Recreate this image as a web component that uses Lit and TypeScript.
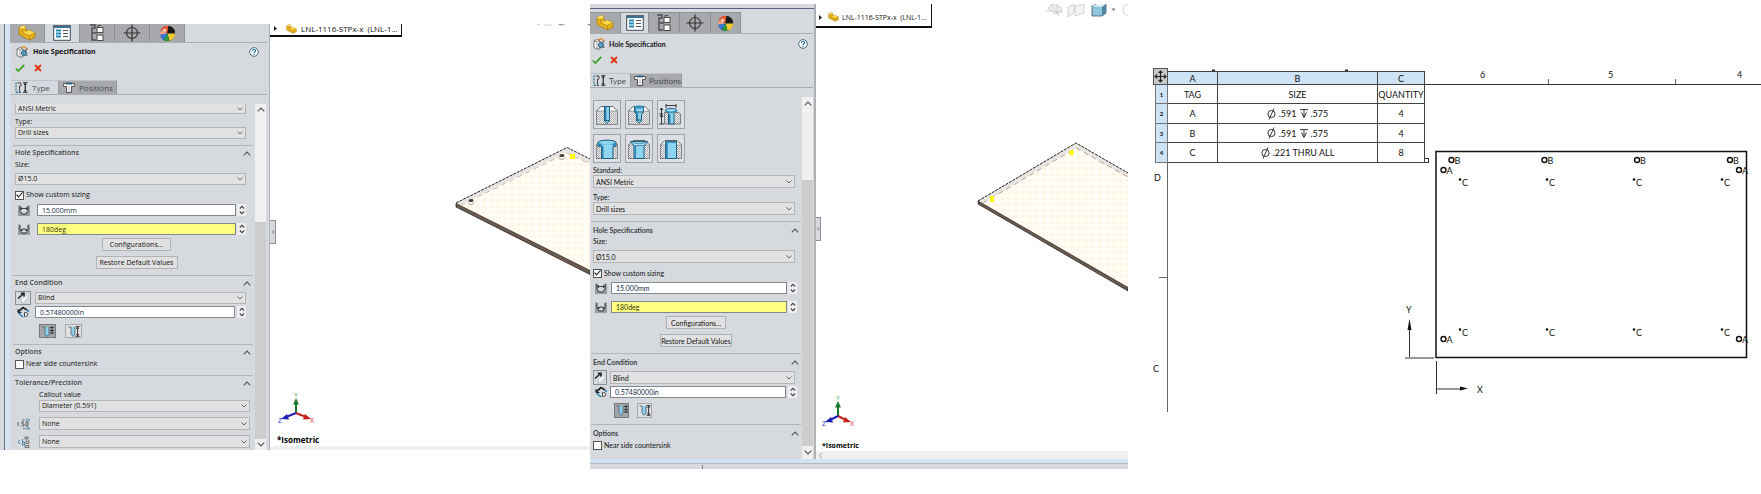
import { LitElement, html, svg, css, nothing } from "lit";
import { customElement, property } from "lit/decorators.js";

const chevronDown = html`<svg class="chev" viewBox="0 0 6 4" width="6" height="4"><path d="M.5 .5 3 3 5.5 .5" fill="none" stroke="#666" /></svg>`;
const chevronUp = html`<svg class="chev" viewBox="0 0 8 5" width="8" height="5"><path d="M.7 4.3 4 1 7.3 4.3" fill="none" stroke="#555" stroke-width="1.1" /></svg>`;

const partShape = svg`
  <path d="M1 2.500 5 .6 8 2v4l3-.8 6 2.600v4.500L11.500 15 1 9.600z" fill="#e8b21c" stroke="#9a7210" stroke-width=".7" />
  <path d="M1 2.500 5 .6 8 2 4.500 3.800z" fill="#ffe27a" />
  <path d="M5 8 11 5.200 17 7.800 11.500 10.400z" fill="#ffd84a" />
  <path d="M4.500 3.800V8l7 2.600V15M11.500 10.500 17 7.800" fill="none" stroke="#a87c12" stroke-width=".7" />`;
const partIcon = (w: number) => html`<svg viewBox="0 0 18 16" width=${w} height=${Math.round((w * 16) / 18)}>${partShape}</svg>`;

const listIcon = html`<svg viewBox="0 0 18 16" width="18" height="16">
  <rect x=".7" y=".7" width="16.600" height="14.600" fill="#fff" stroke="#3c4a55" />
  <rect x="1" y="1" width="16" height="2" fill="#3a6f92" />
  <path d="M3 5.500h5M3 8.500h5M3 11.500h5" stroke="#1d86b5" stroke-width="2" />
  <path d="M10 5.500h5M10 8.500h5M10 11.500h5" stroke="#555" />
</svg>`;
const configIcon = html`<svg viewBox="0 0 16 18" width="16" height="18">
  <path d="M1 1h5v3H3v12h4M3 9h5" fill="none" stroke="#4b4b4d" stroke-width="1.300" />
  <rect x="8" y="3.500" width="6" height="5" fill="#fff" stroke="#4b4b4d" /><rect x="8" y="11" width="6" height="5.500" fill="#fff" stroke="#4b4b4d" />
  <path d="M9 3.500V1.500h3" fill="none" stroke="#4b4b4d" />
</svg>`;
const targetIcon = html`<svg viewBox="0 0 18 18" width="18" height="18">
  <circle cx="9" cy="9" r="5.500" fill="none" stroke="#333" stroke-width="1.200" /><path d="M9 .5v17M.5 9h17" stroke="#333" stroke-width="1.200" />
</svg>`;
const ballIcon = html`<svg viewBox="0 0 18 18" width="17" height="17">
  <circle cx="9" cy="9" r="8" fill="#222" />
  <path d="M9 9 10 1A8 8 0 0 0 2 5z" fill="#e8552a" /><path d="M9 9 2 5A8 8 0 0 0 1.500 12z" fill="#f6a08a" />
  <path d="M9 9 10 1a8 8 0 0 1 7 6z" fill="#1a1a1a" /><path d="M9 9 17 9a8 8 0 0 1-6 7.800z" fill="#f1c832" />
  <path d="M9 9 11 16.800A8 8 0 0 1 5 16z" fill="#2a9a3c" /><path d="M9 9 5 16A8 8 0 0 1 1.200 10z" fill="#3777d6" />
  <circle cx="6" cy="5.500" r="1.800" fill="#fff" opacity=".7" />
</svg>`;
const wizardIcon = html`<svg viewBox="0 0 12 12" width="12" height="12">
  <path d="M1 3 4 1.500 7 3v8L4 11 1 9.500z" fill="#fff" stroke="#555" stroke-width=".8" />
  <path d="M4 3.800V11M1 3l3 .9L7 3" fill="none" stroke="#777" stroke-width=".7" />
  <path d="M5 2 8 .6 11.400 3" fill="none" stroke="#e0902c" stroke-width="1.300" />
  <circle cx="8" cy="7" r="2.600" fill="#4aa3c7" stroke="#345" stroke-width=".7" /><path d="M8.500 5 11.500 3M9.500 8l2 2" stroke="#444" />
</svg>`;
const helpIcon = html`<svg viewBox="0 0 10 10" width="10" height="10"><circle cx="5" cy="5" r="4.300" fill="#fff" stroke="#3a5a70" stroke-width=".9" />
  <path d="M3.500 3.900C3.500 2 6.600 2 6.600 3.900 6.600 5 5 5 5 6.200M5 7v1" fill="none" stroke="#1f6f9a" stroke-width="1.100" /></svg>`;
const okIcon = html`<svg viewBox="0 0 10 8" width="10" height="8"><path d="M.8 4.500 3.300 7 9.300 .8" fill="none" stroke="#35a31c" stroke-width="1.700" /></svg>`;
const cancelIcon = html`<svg viewBox="0 0 8 8" width="8" height="8"><path d="M1 1 7 7M7 1 1 7" stroke="#e03414" stroke-width="1.800" /></svg>`;
const typeIcon = html`<svg viewBox="0 0 13 11" width="13" height="11">
  <path d="M1 .5V10.500M1 10.300h5" stroke="#2b6a90" stroke-width="1.200" stroke-dasharray="2 1" fill="none" />
  <path d="M2.500 1h3.500v3H4.500v6" fill="none" stroke="#444" /><path d="M8 .7h4.500M8 10.200h4.500M10.200 1v9" stroke="#222" stroke-width="1.100" />
  <path d="M8.700 3 10.200 1.200 11.700 3zM8.700 8 10.200 9.800 11.700 8z" fill="#222" />
</svg>`;
const positionsIcon = html`<svg viewBox="0 0 12 11" width="12" height="11">
  <path d="M.6 1.500h10.800v3H8.500v6h-5v-6H.6z" fill="#f4f4f4" stroke="#555" /><path d="M3 1.500h6" stroke="#245f80" stroke-width="1.800" /><path d="M6 4v6" stroke="#bbb" />
</svg>`;
const sizeIcon = (angle: boolean) => html`<svg viewBox="0 0 12 11" width="12" height="11">
  <path d="M0 1 2 0V6L4 9H8L10 6V0L12 1V11H0z" fill="#999da1" /><path d="M2 1V6L4 9H8L10 6V1" fill="none" stroke="#333" />
  ${angle ? svg`<path d="M3 6.500C4 4.500 8 4.500 9 6.500M3.500 5 4 7M8.500 5 8 7" fill="none" stroke="#222" />` : svg`<path d="M2.500 3.500h7M4 2 2.500 3.500 4 5M8 2 9.500 3.500 8 5" fill="none" stroke="#222" stroke-width=".8" />`}
</svg>`;
const reverseIcon = html`<svg viewBox="0 0 12 12" width="12" height="12">
  <path d="M1 6.500 6 2M3.800 1.300H7V4.500" fill="none" stroke="#222" stroke-width="1.600" />
  <path d="M10 5 5 10M5 7v3.300h3.300" fill="none" stroke="#fff" stroke-width="2" /><path d="M11 5.500 6.500 10.500M4.500 7v4h4" fill="none" stroke="#aaa" stroke-width=".8" />
</svg>`;
const depthIcon = html`<svg viewBox="0 0 13 12" width="13" height="12">
  <path d="M1 6 6 1.500 10 4" fill="none" stroke="#222" stroke-width="1.800" /><path d="M1 3v3.500h3.500" fill="none" stroke="#222" />
  <path d="M1.500 7 6 11M10 4.500 12 5.500" stroke="#1f7fa8" stroke-width="1.400" />
  <path d="M7.500 6.500v4h1.200a2 2 0 0 0 0-4z" fill="#fff" stroke="#333" stroke-width=".9" />
</svg>`;
const drillIcon = (shoulder: boolean) => html`<svg viewBox="0 0 12 11" width="12" height="11">
  <path d="M.5 1H3V8L5 10.500 7 8V1" fill="#8fd0ee" stroke="#46606e" stroke-width=".8" />
  ${shoulder ? svg`<path d="M8 1.500h4M8 4.500h4M8 7h4M10 0v8" stroke="#222" stroke-width=".8" />` : svg`<path d="M7.500 .6h4M7.500 10.300h4M9.600 1v9M8.400 2.800 9.600 1.200 10.800 2.800M8.400 8.200 9.600 9.800 10.800 8.200" stroke="#222" stroke-width=".9" fill="none" />`}
</svg>`;
const toleranceIcon = html`<svg viewBox="0 0 13 12" width="13" height="12">
  <path d="M1 4v4M3 8h.8M5 4h2M5 4v2h2v2H5M9 4h2v4H9z" fill="none" stroke="#444" stroke-width=".8" />
  <path d="M5 2h3M10 .5v3M12 .5v3M6 10.500h2.500M10 9v3M12 9v3" stroke="#2f7f9e" stroke-width=".9" />
</svg>`;
const precisionIcon = html`<svg viewBox="0 0 13 12" width="13" height="12">
  <path d="M3 4 1 6 3 8M5.500 3v6h2V6h-2" fill="none" stroke="#2f7f9e" stroke-width=".9" />
  <path d="M8 1h3v2H8zM9 5h3v2.500H9zM8 9.500h4v2H8z" fill="none" stroke="#555" stroke-width=".8" />
</svg>`;

const holeTop: Record<string, ReturnType<typeof svg>> = {
  plain: svg`<path d="M9.500 3.500h5v14.500l-2.500 2.500-2.500-2.500z" fill="#8fd4f1" stroke="#205f82" /><path d="M10.700 4v14" stroke="#2f86b0" stroke-width="1.500" /><path d="M9.500 17.500h5" stroke="#205f82" />`,
  counterbore: svg`<path d="M7.500 4h9v5.500l-2 1.500v7L12 20l-2.500-2v-7l-2-1.500z" fill="#8fd4f1" stroke="#205f82" /><path d="M8.500 5v4.500l2 1.500v7" fill="none" stroke="#2f86b0" stroke-width="1.500" /><ellipse cx="12" cy="4" rx="4.500" ry="1.800" fill="#3b93bb" /><path d="M8 9h8M9.500 17h5" stroke="#205f82" />`,
  countersink: svg`<path d="M6 7.500C8 4.500 16 4.500 18 7.500L15 10.500V21H9.500V10.500z" fill="#8fd4f1" stroke="#205f82" /><path d="M6 7.500C9 10 15 10 18 7.500M10.700 11v9.500" fill="none" stroke="#2f86b0" stroke-width="1.400" />`,
  slotBore: svg`<path d="M3 5C7 2.500 17 2.500 21 5v4.500h-3V21.500H6.500V9.500H3z" fill="#8fd4f1" stroke="#205f82" /><path d="M3 5.500c4 2.500 14 2.500 18 0v4h-3V7.500H6.500v2H3z" fill="#2f86b0" /><path d="M7.700 9v12.500" stroke="#2f86b0" stroke-width="1.600" />`,
  slotSink: svg`<path d="M3.500 4.500h17L17 9v12.500H7V9z" fill="#8fd4f1" stroke="#205f82" /><path d="M3.500 4.500C9 7.500 15 7.500 20.500 4.500L17 8.500H7z" fill="#bfe6f6" stroke="#205f82" stroke-width=".6" /><path d="M8.200 9v12.500" stroke="#2f86b0" stroke-width="1.600" />`,
  slot: svg`<path d="M6.500 4.500h11v17h-11z" fill="#8fd4f1" stroke="#205f82" /><path d="M7.700 4.500v17" stroke="#2f86b0" stroke-width="2" /><path d="M6.500 4.500h11v1.500h-11z" fill="#3b93bb" />`,
};
const holeTypes = [
  ["Counterbore", "plain"], ["Countersink", "counterbore"], ["Hole", "countersink"],
  ["Counterbore slot", "slotBore"], ["Countersink slot", "slotSink"], ["Slot", "slot"],
];
const holeIcon = (kind: string) => html`<svg viewBox="0 0 24 24" width="24" height="24">
  <defs><pattern id="hatch" width="2" height="2" patternUnits="userSpaceOnUse"><rect width="2" height="2" fill="#eee" /><rect width="1" height="1" fill="#a5a5a5" /><rect x="1" y="1" width="1" height="1" fill="#bbb" /></pattern></defs>
  ${kind === "countersink"
    ? svg`<path d="M5.500 9.500h14l2 1.500V21H5.500z" fill="url(#hatch)" stroke="#555" stroke-width=".7" /><path d="M7 1v4M17 1v4M7 2.500h10M2.500 5v16M0 21h5M0 11h4M1 14 2.500 11.500 4 14M1 7 2.500 5 4 7" stroke="#222" stroke-width=".9" fill="none" />`
    : svg`<path d="M1.500 8 6 3.500H18L22.500 8V21.500h-21z" fill="#fff" stroke="#555" stroke-width=".9" /><path d="M1.500 8h21v13.500h-21z" fill="url(#hatch)" stroke="#777" stroke-width=".6" />`}
  ${holeTop[kind]}
</svg>`;

@customElement("hole-panel")
export class HolePanel extends LitElement {
  @property({ type: Boolean, reflect: true }) compact = false;

  static styles = css`
    :host {
      --lead: 22px; --lead-end: 20px; --sec: 2px; --row: 14px; --label-gap: 3px; --control: 12px;
      display: flex; flex-direction: column; min-width: 0;
      background: #d6dadf; color: #111;
      font: 7px/10px "Open Sans", "Noto Sans", sans-serif;
      border-right: 1px solid #aeb1b6;
    }
    :host([compact]) {
      --lead: 18px; --lead-end: 17px; --sec: 3px; --row: 15px; --label-gap: 4px; --control: 13px;
      font-family: Lato, "Open Sans", sans-serif;
      border-right-width: 2px;
    }
    * { box-sizing: border-box; }
    svg { display: block; }
    button, input, select { font: inherit; color: inherit; margin: 0; padding: 0; border-radius: 0; min-width: 0; }
    button { display: grid; place-items: center; background: none; border: 0; }
    .rail { height: 5px; border-bottom: 1px solid #5d6285; margin-bottom: 3px; display: grid; place-items: center; }
    .tabs { display: grid; grid-template-columns: repeat(5, 35px) 1fr; height: 19px; margin-right: 2px; border-bottom: 1px solid #aaadb1; overflow: hidden; }
    :host([compact]) .tabs { grid-template-columns: 31px 28px 31px 31px 30px 1fr; height: 22px; margin-right: 1px; }
    .tabs button { background: #a7a9ac; border-right: 1px solid #8d8f93; height: 18px; align-content: center; }
    :host([compact]) .tabs button { height: 21px; border-top: 1px solid #8d8f93; }
    .tabs button.on { background: none; }
    .title { display: flex; align-items: center; gap: 5px; height: 18px; padding: 0 10px 0 6px; }
    :host([compact]) .title { height: 20px; gap: 4px; padding: 0 6px 0 3px; }
    h2, h3 { font: inherit; font-weight: 700; margin: 0; flex: 1; }
    h3 { color: #3c3f44; font-weight: 600; }
    :host([compact]) h3 { font-weight: 700; }
    .confirm { display: flex; gap: 9px; height: 13px; padding-left: 5px; margin-bottom: 6px; }
    :host([compact]) .confirm { height: 12px; padding-left: 2px; gap: 8px; margin-bottom: 7px; }
    .modes { display: flex; height: 15px; margin: 0 2px 9px 1px; border-bottom: 1px solid #aaadb1; color: #4a4d52; }
    :host([compact]) .modes { margin: 0 1px 9px 0; }
    .modes button { display: flex; align-items: center; gap: 4px; width: 48px; padding-left: 4px; border-top: 1px solid #bfc2c6; border-right: 1px solid #97999d; font-size: 8px; }
    .modes button + button { width: 58px; background: #a7a9ac; }
    :host([compact]) .modes button { width: 41px; padding-left: 3px; gap: 3px; }
    :host([compact]) .modes button + button { width: 51px; }
    .body { display: flex; flex: 1; padding-right: 3px; }
    :host([compact]) .body { padding-right: 1px; }
    .content { flex: 1; min-width: 0; padding: 0 9px 2px 5px; }
    :host([compact]) .content { padding: 0 7px 6px 3px; }
    .scroll { width: 11px; background: #f0f0f0; display: flex; flex-direction: column; align-items: center; }
    .scroll .chev { margin: 3px 0; }
    .thumb { align-self: stretch; background: #cdcdcd; flex: 219; }
    .space { flex: 108; }
    :host([compact]) .scroll .chev { margin: 4px 0; }
    :host([compact]) .thumb { flex: 267; }
    :host([compact]) .space { flex: 70; }
    .combo { display: grid; flex: 1; min-width: 0; }
    .combo > * { grid-area: 1 / 1; }
    .combo .chev { place-self: center end; margin-right: 3px; pointer-events: none; }
    select { appearance: none; width: 100%; height: var(--control); border: 1px solid #b3b5b8; background: #e1e1e1; padding: 0 2px; outline: 0; line-height: 10px; }
    .cut select { height: 10px; border-top: 0; }
    .label { display: block; height: 10px; }
    .gap { margin-top: var(--label-gap); }
    .sec { display: flex; align-items: center; margin: 6px -7px 0 -2px; padding: var(--sec) 2px 0; border-top: 1px solid #b2b5b9; }
    :host([compact]) .sec { margin-right: -6px; }
    .size { margin-top: 2px; margin-bottom: 3px; }
    :host([compact]) .size { margin-top: 1px; margin-bottom: 4px; }
    .check { display: flex; align-items: center; gap: 2px; height: 10px; margin-top: 5px; }
    .check.opt { margin-top: 2px; }
    input[type="checkbox"] { appearance: none; width: 9px; height: 9px; border: 1px solid #555; background: #fff; display: grid; place-items: center; }
    input[type="checkbox"]:checked::before { content: ""; width: 7px; height: 6px; background: #333; clip-path: polygon(0 50%, 14% 36%, 36% 66%, 88% 0, 100% 14%, 36% 96%); }
    .field { display: grid; grid-template-columns: var(--lead) 1fr 10px; align-items: center; margin-top: 7px; }
    .field > svg { justify-self: start; margin-left: 3px; }
    .field.first { margin-top: 4px; }
    :host([compact]) .field { margin-right: -2px; }
    :host([compact]) .field > svg { margin-left: 2px; }
    .field.depth { grid-template-columns: var(--lead-end) 1fr 11px; margin-top: 1px; }
    .field.depth > svg { margin-left: 2px; }
    input[type="text"] { height: 12px; width: 100%; border: 1px solid #85888c; background: #fff; padding: 0 4px; color: #152c48; }
    input[type="text"].warn { background: #ffff80; color: #333310; }
    .spin { justify-self: end; width: 9px; height: 12px; background: #efefef; display: grid; place-items: center; }
    .push { height: 13px; margin: 3px auto 0; width: 69px; border: 1px solid #b0b2b5; background: #e1e1e1; white-space: nowrap; }
    .push + .push { margin-top: 5px; width: 82px; }
    :host([compact]) .push { width: 60px; }
    :host([compact]) .push + .push { width: 72px; }
    .pushes { padding-left: 12px; }
    :host([compact]) .pushes { padding-left: 4px; }
    .end { display: grid; grid-template-columns: var(--lead-end) 1fr; align-items: center; margin-top: 3px; }
    .flip { width: 16px; height: var(--row); border: 1px solid #8b8e92; }
    :host([compact]) .flip { width: 14px; }
    .modesel { display: flex; gap: 9px; margin: 6px 0 0 24px; }
    :host([compact]) .modesel { margin: 5px 0 0 21px; gap: 8px; }
    .modesel button { width: 17px; height: var(--row); border: 1px solid #a5a7aa; background: #e1e1e1; }
    :host([compact]) .modesel button { width: 15px; }
    .modesel button.on { background: #a3a5a8; border-color: #77797c; }
    .tol { display: grid; grid-template-columns: 24px 1fr; align-items: center; margin: 5px -4px 0 0; --control: 13px; }
    .tol.first { margin-top: 2px; --control: 12px; }
    .tol .label { grid-column: 2; }
    .tol .combo { grid-column: 2; }
    .tol > svg { grid-column: 1; grid-row: 1; margin-left: 2px; }
    .holes { display: grid; grid-template-columns: repeat(3, 28px); gap: 5px 4px; margin: 3px 0 2px; }
    .holes button { height: 29px; border: 1px solid #9fa2a6; background: #dcdfe3; }
  `;

  private combo(id: string, value: string, cut = false) {
    return html`<span class="combo ${cut ? "cut" : ""}"><select id=${id} aria-label=${value}><option>${value}</option></select>${chevronDown}</span>`;
  }

  private section(name: string) {
    return html`<div class="sec"><h3>${name}</h3>${chevronUp}</div>`;
  }

  private spin() {
    return html`<span class="spin"><svg viewBox="0 0 6 10" width="6" height="10"><path d="M.8 3.500 3 1.300 5.200 3.500M.8 6.500 3 8.700 5.200 6.500" fill="none" stroke="#444" stroke-width="1.100" /></svg></span>`;
  }

  render() {
    const tabs = [partIcon(18), listIcon, configIcon, targetIcon, ballIcon];
    const names = ["Feature tree", "Properties", "Configurations", "Dimensions", "Display"];
    return html`
      ${this.compact ? html`<div class="rail"></div>` : nothing}
      <div class="tabs">${tabs.map((icon, i) => html`<button class=${i === 1 ? "on" : ""} aria-label=${names[i]}>${icon}</button>`)}</div>
      <div class="title">${wizardIcon}<h2>Hole Specification</h2><button aria-label="Help">${helpIcon}</button></div>
      <div class="confirm"><button aria-label="OK">${okIcon}</button><button aria-label="Cancel">${cancelIcon}</button></div>
      <div class="modes"><button>${typeIcon}Type</button><button>${positionsIcon}Positions</button></div>
      <div class="body">
        <div class="content">
          ${this.compact
            ? html`<div class="holes">${holeTypes.map(([name, kind]) => html`<button aria-label=${name}>${holeIcon(kind)}</button>`)}</div>
                <label class="label" for="standard">Standard:</label>`
            : nothing}
          ${this.combo("standard", "ANSI Metric", !this.compact)}
          <label class="label gap" for="type">Type:</label>
          ${this.combo("type", "Drill sizes")}
          ${this.section("Hole Specifications")}
          <label class="label size" for="size">Size:</label>
          ${this.combo("size", "Ø15.0")}
          <label class="check"><input type="checkbox" checked />Show custom sizing</label>
          <div class="field first">${sizeIcon(false)}<input type="text" aria-label="Diameter" value="15.000mm" />${this.spin()}</div>
          <div class="field">${sizeIcon(true)}<input class="warn" type="text" aria-label="Angle" value="180deg" />${this.spin()}</div>
          <div class="pushes"><button class="push">Configurations...</button><button class="push">Restore Default Values</button></div>
          ${this.section("End Condition")}
          <div class="end"><button class="flip" aria-label="Reverse direction">${reverseIcon}</button>${this.combo("end", "Blind")}</div>
          <div class="field depth">${depthIcon}<input type="text" aria-label="Depth" value="0.57480000in" />${this.spin()}</div>
          <div class="modesel"><button class="on" aria-label="Depth to shoulder">${drillIcon(true)}</button><button aria-label="Depth to tip">${drillIcon(false)}</button></div>
          ${this.section("Options")}
          <label class="check opt"><input type="checkbox" />Near side countersink</label>
          ${this.compact
            ? nothing
            : html`${this.section("Tolerance/Precision")}
                <div class="tol first"><label class="label" for="callout">Callout value</label>${this.combo("callout", "Diameter (0.591)")}</div>
                <div class="tol">${toleranceIcon}${this.combo("tolerance", "None")}</div>
                <div class="tol">${precisionIcon}${this.combo("precision", "None")}</div>`}
        </div>
        <div class="scroll">${chevronUp}<span class="space"></span><span class="thumb"></span>
          <svg class="chev" viewBox="0 0 8 5" width="8" height="5"><path d="M.7 .7 4 4 7.300 .7" fill="none" stroke="#555" stroke-width="1.200" /></svg></div>
      </div>`;
  }
}

@customElement("model-view")
export class ModelView extends LitElement {
  @property({ type: Boolean, reflect: true }) compact = false;

  static styles = css`
    :host { display: block; position: relative; min-width: 0; font: 8px/11px "Open Sans", "Noto Sans", sans-serif; color: #111; }
    :host([compact]) { font: 7px/11px "Open Sans", sans-serif; }
    svg { display: block; }
    .scene { width: 100%; height: auto; }
    .tree { position: absolute; top: 0; left: 0; display: flex; align-items: center; gap: 4px; box-sizing: border-box;
      width: 132px; height: 13px; padding: 0 0 2px 4px; border: solid #111; border-width: 0 1px 2px 0; background: #fff; white-space: nowrap; }
    :host([compact]) .tree { width: 116px; height: 24px; padding: 4px 0 0 3px; gap: 3px; }
    .arrow { margin-right: 5px; }
    :host([compact]) .arrow { margin-right: 3px; }
    .grip { position: absolute; left: 0; top: 196px; width: 5px; height: 22px; border: 1px solid #8d9096; border-left: 0; background: #d6dadf; display: grid; place-items: center; }
    :host([compact]) .grip { top: 213px; width: 4px; }
    text { font-family: "Open Sans", sans-serif; }
  `;

  private triad(x: number, y: number, w: number) {
    return svg`<g transform="translate(${x} ${y})">
      <path d="M0 0V-9" stroke="#1c7a2c" stroke-width="2" /><path d="M-3-8.500 0-15 3-8.500z" fill="#1c7a2c" />
      <path d="M0 0 ${w - 4} 4" stroke="#c4201c" stroke-width="2" /><path d="M${w - 5} 1 ${w + 1} 6 ${w - 7} 6.500z" fill="#c4201c" />
      <path d="M0 0 ${4 - w} 4" stroke="#2020b4" stroke-width="2" /><path d="M${5 - w} 1 ${-w - 1} 6 ${7 - w} 6.500z" fill="#2020b4" />
      <text x="0" y="-16" fill="#2aa336" font-size="6" text-anchor="middle">Y</text>
      <text x="${w + 2}" y="10" fill="#f03030" font-size="7" text-anchor="middle">X</text>
      <text x="${-w - 2}" y="10" fill="#3030f0" font-size="7" text-anchor="middle">Z</text></g>`;
  }

  render() {
    const dots = svg`<defs><pattern id="dots" width="7" height="6" patternUnits="userSpaceOnUse"><rect width="7" height="6" fill="#fffdf6" /><rect x="2" y="1" width="4" height="3" fill="#fff7e4" /></pattern></defs>`;
    const first = svg`
      <path d="M186 179 297 124 320 136V250L186 182z" fill="url(#dots)" />
      <path d="M187 180.500 297 126 320 138" fill="none" stroke="#e9e5e2" stroke-width="4" />
      <path d="M191 181 297 129 320 140" fill="none" stroke="#cdbdb1" stroke-dasharray="5 4" />
      <path d="M186 179 297 123.500 320 135" fill="none" stroke="#222" stroke-dasharray="3 1" />
      <path d="M186 179.500 320 246.500V250.500L186 183z" fill="#6c5c50" stroke="#1e1a18" stroke-width=".7" />
      <g fill="#4b3a36"><ellipse cx="201" cy="176.500" rx="2.500" ry="1.500" /><ellipse cx="292" cy="131.500" rx="2.500" ry="1.500" /></g>
      <path d="M198 178.500c1 2.500 5 2.500 6 0M289 133.500c1 2.500 5 2.500 6 0" fill="none" stroke="#999" />
      <rect x="300" y="130" width="5" height="5" fill="#ff0" />
      <path d="M267 0 270 1M274 1h8M289 0v1h6" stroke="#ccc" /><path d="M317 0h3v2z" fill="#789" />
      <rect y="422" width="320" height="4" fill="#f0f0f0" />
      ${this.triad(26, 389, 14)}
      <text x="7" y="419" font-size="8" font-weight="700">*Isometric</text>`;
    const second = svg`
      <path d="M162 197 260 139 312 169V287L162 199z" fill="url(#dots)" />
      <path d="M163 198.500 260 141.500 312 171.500" fill="none" stroke="#e9e5e2" stroke-width="4" />
      <path d="M167 199 260 144 312 173" fill="none" stroke="#b3a69d" stroke-dasharray="5 4" />
      <path d="M162 197 260 139 312 169" fill="none" stroke="#222" stroke-dasharray="3 1" />
      <path d="M162 197 312 283.500V287L162 200z" fill="#6c5c50" stroke="#1e1a18" stroke-width=".7" />
      <rect x="253.500" y="146" width="4" height="5" fill="#ff0" /><rect x="174" y="192" width="4" height="6" fill="#ff0" />
      <g fill="#f2f2f2" stroke="#c8c8c8" stroke-width=".8"><path d="M232 4 236 0 245 3 246 8 239 10zM230 7h16M235 1 243 12M241 0V9" />
        <path d="M252 3 258 0v9l-6 4zM259 2 268 0v9l-9 3z" /></g>
      <path d="M276 2 281 0h9v9l-4 3h-10z" fill="#8ec6df" stroke="#456" stroke-width=".8" /><path d="M276 2 281 0h9l-4 3z" fill="#dff1f8" /><path d="M286 3v9l4-3V0z" fill="#4f87a1" />
      <path d="M295.500 4.500h4l-2 2.500z" fill="#777" /><path d="M312 0c-6 0-7 10 0 12" fill="none" stroke="#ccc" />
      <rect y="447" width="312" height="8" fill="#f0f0f0" /><path d="M6 449 3 451.500 6 454" fill="none" stroke="#aaa" />
      ${this.triad(22, 412, 12)}
      <text x="6" y="444" font-size="7" font-weight="700">*Isometric</text>`;
    return html`
      <svg class="scene" viewBox=${this.compact ? "0 0 312 455" : "0 0 320 426"}>${dots}${this.compact ? second : first}</svg>
      <div class="tree"><svg class="arrow" viewBox="0 0 3 5" width="3" height="5"><path d="M0 0 3 2.500 0 5z" fill="#222" /></svg>${partIcon(11)}<span>LNL-1116-STPx-x&nbsp; (LNL-1...</span></div>
      <div class="grip"><svg viewBox="0 0 4 4" width="4" height="4"><path d="M3 .5 1 2 3 3.500z" fill="none" stroke="#999" stroke-width=".8" /></svg></div>`;
  }
}

const diameter = html`<svg class="sym" viewBox="0 0 9 12" width="9" height="12"><circle cx="4.500" cy="6" r="3.600" fill="none" stroke="#222" stroke-width=".9" /><path d="M7 .5 2 11.500" stroke="#222" stroke-width=".9" /></svg>`;
const depth = html`<svg class="sym" viewBox="0 0 8 9" width="8" height="9"><path d="M0 .6h8M4 .6V8" stroke="#222" stroke-width=".9" /><path d="M1.500 3.500 4 8.500 6.500 3.500" fill="none" stroke="#222" stroke-width=".9" /></svg>`;

@customElement("hole-drawing")
export class HoleDrawing extends LitElement {
  static styles = css`
    :host { display: block; position: relative; min-width: 0; font: 9px/11px Lato, "Open Sans", sans-serif; color: #111; }
    .sheet { display: block; width: 100%; height: auto; }
    text { font: 9px Lato, "Open Sans", sans-serif; fill: #111; }
    table { position: absolute; left: 27px; top: 11px; border-collapse: collapse; table-layout: fixed; width: 270px; background: #fff; text-align: center; }
    th, td { box-sizing: border-box; padding: 0; border: 1px solid #444; font-weight: 400; height: 19px; white-space: nowrap; }
    thead th { height: 13px; }
    .edge { background: #cfe3f6; }
    tbody .edge { font-size: 6px; font-weight: 700; border-color: #777; }
    .n { width: 12px; } .a { width: 50px; } .c { width: 47px; }
    .tall td, .tall th { height: 20px; }
    .cell { display: flex; align-items: center; justify-content: center; gap: 3px; }
    .sym { display: block; }
    .move { position: absolute; left: 25px; top: 8px; width: 15px; height: 17px; box-sizing: border-box; padding: 0; border: 1px solid #555; background: #c8c8c8; display: grid; place-items: center; }
    .move svg { display: block; }
  `;

  render() {
    const mark = (x: number, y: number, tag: string) => svg`<circle cx=${x} cy=${y} r="2.500" fill="none" stroke="#111" stroke-width="1.400" /><text x=${x + 3} y=${y + 4}>${tag}</text>`;
    const point = (x: number, y: number) => svg`<circle cx=${x} cy=${y} r="1.300" fill="#111" /><text x=${x + 2} y=${y + 6}>C</text>`;
    const rows = [
      ["TAG", html`SIZE`, "QUANTITY"],
      ["A", html`${diameter}.591${depth}.575`, "4"],
      ["B", html`${diameter}.591${depth}.575`, "4"],
      ["C", html`${diameter}.221 THRU ALL`, "8"],
    ] as const;
    return html`
      <svg class="sheet" viewBox="0 0 633 352">
        <path d="M27 24.500H633" stroke="#333" /><path d="M39.500 24V352M31 217.500h8M420.500 19v5M547.500 19v5" stroke="#666" fill="none" />
        <path d="M84 10.500h3M217 10.500h3" stroke="#222" stroke-width="2" />
        <text x="352" y="18">6</text><text x="480" y="18">5</text><text x="609" y="18">4</text>
        <text x="26" y="121">D</text><text x="25" y="312">C</text>
        <rect x="308" y="91.500" width="310.500" height="206" fill="none" stroke="#111" stroke-width="1.500" />
        ${[323.5, 416.5, 509, 602].map((x) => mark(x, 100, "B"))}
        ${mark(315.5, 110, "A")}${mark(611, 110, "A")}${mark(315.5, 279, "A")}${mark(611, 279, "A")}
        ${[332, 419, 506, 594].map((x) => svg`${point(x, 119.500)}${point(x, 269.500)}`)}
        <path d="M281.500 297V262M277 298h29" stroke="#333" /><path d="M281.500 259 279.500 270h4z" fill="#111" />
        <path d="M308.500 301v33M308 329h24" stroke="#333" /><path d="M340 328.500 332 326.500v4z" fill="#111" />
        <text x="278" y="253">Y</text><text x="349" y="333">X</text>
        <rect x="296.500" y="98.500" width="4" height="4" fill="#fff" stroke="#333" />
      </svg>
      <table>
        <thead><tr><th class="edge n"></th><th class="edge a" scope="col">A</th><th class="edge" scope="col">B</th><th class="edge c" scope="col">C</th></tr></thead>
        <tbody>${rows.map(([tag, size, qty], i) => html`<tr class=${i % 2 ? "tall" : ""}><th class="edge" scope="row">${i + 1}</th><td>${tag}</td><td><span class="cell">${size}</span></td><td>${qty}</td></tr>`)}</tbody>
      </table>
      <button class="move" aria-label="Move table"><svg viewBox="0 0 12 12" width="13" height="13"><path d="M6 1v10M1 6h10M4.300 2.800 6 1 7.700 2.800M4.300 9.200 6 11 7.700 9.200M2.800 4.300 1 6 2.800 7.700M9.200 4.300 11 6 9.200 7.700" fill="none" stroke="#222" stroke-width="1.100" /></svg></button>`;
  }
}

@customElement("app-root")
export class AppRoot extends LitElement {
  static styles = css`
    :host { display: grid; grid-template-columns: 590fr 538fr 633fr; align-items: start; background: #fff; min-height: 100vh; box-sizing: border-box; padding-top: 4px; }
    .first { display: grid; grid-template-columns: 10px 260fr 320fr; margin-top: 20px; }
    .frame { border-right: 5px solid #d3e3f3; background: linear-gradient(#6c7076, #6c7076) right / 1px 100% no-repeat #d6dadf; }
    .second { display: grid; grid-template-columns: 226fr 312fr; }
    .foot { height: 10px; box-sizing: border-box; border-top: 4px solid #d3e3f3; background: linear-gradient(#b4bac2, #b4bac2) top / 100% 1px no-repeat #d6dadf; grid-column: 1 / -1; display: grid; background-origin: padding-box; background-clip: padding-box; }
    .foot::before { content: ""; width: 1px; height: 4px; margin: 2px 0 0 112px; background: #777; }
    hole-drawing { margin-top: 56px; }
  `;

  render() {
    return html`
      <div class="first"><div class="frame"></div><hole-panel></hole-panel><model-view></model-view></div>
      <div class="second"><hole-panel compact></hole-panel><model-view compact></model-view><div class="foot"></div></div>
      <hole-drawing></hole-drawing>`;
  }
}
